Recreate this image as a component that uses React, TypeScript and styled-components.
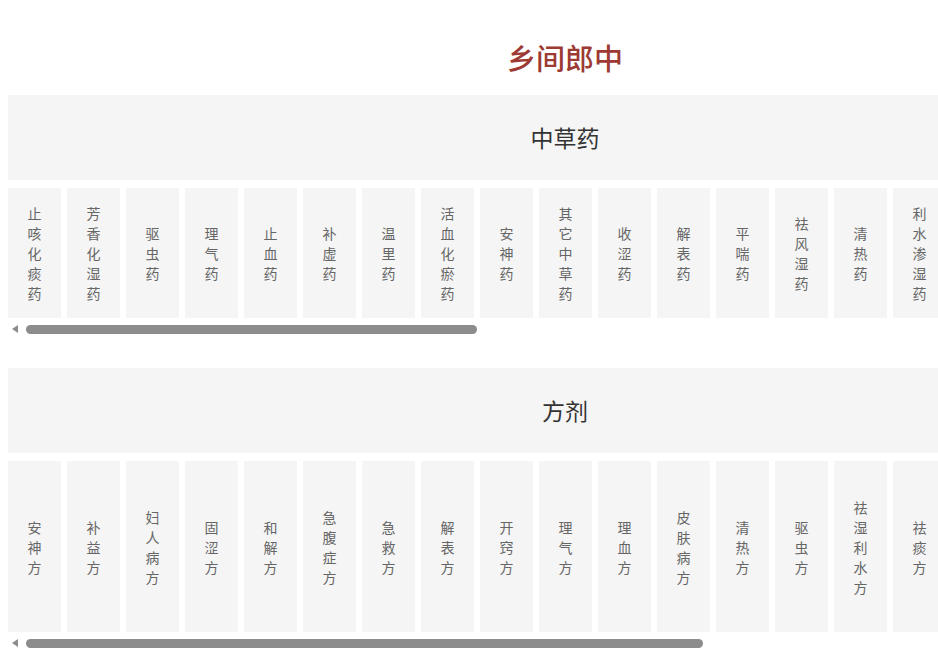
import React from "react";
import styled, { createGlobalStyle } from "styled-components";

const GlobalStyle = createGlobalStyle`
  html, body {
    background: #ffffff;
  }
  body {
    margin: 8px 0 0 8px;
    font-family: "Noto Sans CJK SC", "Noto Sans", sans-serif;
  }
`;

const Viewport = styled.div`
  width: calc(100vw - 8px);
  overflow: hidden;
`;

const Page = styled.div`
  width: 1114px;
  display: flex;
  flex-direction: column;
`;

const Title = styled.h1`
  margin: 0;
  padding-top: 12px;
  height: 75px;
  line-height: 75px;
  text-align: center;
  font-size: 29px;
  font-weight: 500;
  color: #9c3a33;
`;

const Section = styled.section<{ $gapTop: number }>`
  display: flex;
  flex-direction: column;
  margin-top: ${(p) => p.$gapTop}px;
`;

const Header = styled.h2`
  margin: 0;
  height: 85px;
  line-height: 85px;
  background: #f5f5f5;
  text-align: center;
  font-size: 23px;
  font-weight: 400;
  color: #333333;
`;

const Row = styled.div`
  margin-top: 8px;
  display: flex;
  gap: 6px;
  overflow: hidden;
`;

const Card = styled.div<{ $height: number }>`
  flex: 0 0 53px;
  height: ${(p) => p.$height}px;
  background: #f5f5f5;
  display: flex;
  align-items: center;
  justify-content: center;
`;

const Label = styled.span`
  width: 14px;
  font-size: 14px;
  line-height: 20px;
  color: #666666;
  text-align: center;
  word-break: break-all;
`;

const ScrollTrack = styled.div`
  margin-top: 6px;
  height: 10px;
  display: flex;
  align-items: center;
`;

const Arrow = styled.span`
  margin-left: 4px;
  width: 0;
  height: 0;
  border-top: 4px solid transparent;
  border-bottom: 4px solid transparent;
  border-right: 6px solid #8c8c8c;
`;

const Thumb = styled.span<{ $width: number }>`
  margin-left: 8px;
  width: ${(p) => p.$width}px;
  height: 9px;
  border-radius: 5px;
  background: #8c8c8c;
`;

const herbs = [
  "止咳化痰药",
  "芳香化湿药",
  "驱虫药",
  "理气药",
  "止血药",
  "补虚药",
  "温里药",
  "活血化瘀药",
  "安神药",
  "其它中草药",
  "收涩药",
  "解表药",
  "平喘药",
  "祛风湿药",
  "清热药",
  "利水渗湿药",
  "消食药",
  "泻下药",
  "开窍药",
  "平肝息风药",
];

const formulas = [
  "安神方",
  "补益方",
  "妇人病方",
  "固涩方",
  "和解方",
  "急腹症方",
  "急救方",
  "解表方",
  "开窍方",
  "理气方",
  "理血方",
  "皮肤病方",
  "清热方",
  "驱虫方",
  "祛湿利水方",
  "祛痰方",
  "温里方",
  "消导化积方",
  "泻下方",
  "治风方",
];

type GroupProps = {
  title: string;
  items: string[];
  cardHeight: number;
  thumb: number;
  gapTop: number;
};

function Group({ title, items, cardHeight, thumb, gapTop }: GroupProps) {
  return (
    <Section $gapTop={gapTop}>
      <Header>{title}</Header>
      <Row>
        {items.map((name) => (
          <Card key={name} $height={cardHeight}>
            <Label>{name}</Label>
          </Card>
        ))}
      </Row>
      <ScrollTrack>
        <Arrow />
        <Thumb $width={thumb} />
      </ScrollTrack>
    </Section>
  );
}

export default function App() {
  return (
    <>
      <GlobalStyle />
      <Viewport>
        <Page>
          <Title>乡间郎中</Title>
          <Group title="中草药" items={herbs} cardHeight={130} thumb={451} gapTop={0} />
          <Group title="方剂" items={formulas} cardHeight={171} thumb={677} gapTop={34} />
        </Page>
      </Viewport>
    </>
  );
}
